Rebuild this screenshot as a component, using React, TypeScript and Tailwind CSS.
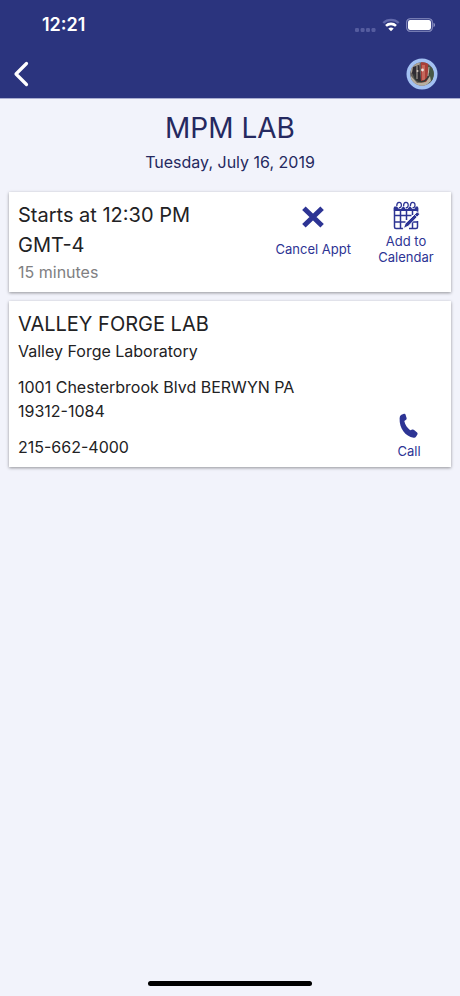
import type { ReactNode } from "react";

function StatusBar() {
  return (
    <div className="flex h-[50px] items-center justify-between pl-[42px] pr-6">
      <time className="text-lg font-semibold leading-6">12:21</time>
      <div className="flex items-center gap-[6px]">
        <svg width="22" height="16" viewBox="0 0 22 16" fill="#555c9f" aria-hidden="true">
          <rect x="1" y="11" width="4" height="4" rx="1.2" />
          <rect x="6.600" y="11" width="4" height="4" rx="1.2" />
          <rect x="12" y="11" width="4" height="4" rx="1.2" />
          <rect x="17.500" y="11" width="4" height="4" rx="1.2" />
        </svg>
        <svg width="18" height="14" viewBox="0 0 18 14" fill="none" aria-hidden="true">
          <path d="M1.300 5C5.500 .8 12.500 .8 16.700 5" stroke="#6269ab" strokeWidth="2.300" />
          <path d="M4 7.900C6.800 5.200 11.200 5.200 14 7.900" stroke="#fff" strokeWidth="2.600" />
          <path d="M6.300 10.600C7.900 9.200 10.100 9.200 11.700 10.600L9 13.300Z" fill="#fff" />
        </svg>
        <svg width="30" height="14" viewBox="0 0 30 14" aria-hidden="true">
          <rect x=".7" y=".7" width="25.600" height="12.600" rx="3.600" fill="none" stroke="#8e93c4" strokeWidth="1.100" />
          <rect x="2" y="2" width="23" height="10" rx="2.200" fill="#fff" />
          <path d="M27.500 4.800c2 .7 2 3.700 0 4.400Z" fill="#8e93c4" />
        </svg>
      </div>
    </div>
  );
}

function Avatar() {
  return (
    <svg width="32" height="32" viewBox="0 0 32 32" aria-hidden="true">
      <defs>
        <clipPath id="portrait">
          <circle cx="16" cy="16" r="11.800" />
        </clipPath>
      </defs>
      <circle cx="16" cy="16" r="15.500" fill="#a3c1f3" />
      <g clipPath="url(#portrait)">
        <path fill="#69615d" d="M0 0h32v32H0z" />
        <path fill="#aaa195" d="M4 5h10l-2 6-7 4z" />
        <path fill="#302b32" d="M7 9l6-2 2 17-5-2-4-7z" />
        <path fill="#a83f39" d="M15 3h7l1 12-2 9-6 1z" />
        <path fill="#c5685b" d="M16 7h3v15h-3z" />
        <path fill="#465746" d="M22 7l6 4v11l-5 4z" />
        <path fill="#b8afa0" d="M5 18l6 7 9-1 4-6 1 5-7 6H9l-5-6z" />
        <path fill="none" stroke="#343a37" strokeWidth="1.500" d="M8 16c0 10 14 11 15-1" />
        <path stroke="#d9d1c2" strokeWidth=".8" d="M11 8v13M23 9l-1 9" />
        <circle cx="16.500" cy="12" r="1.400" fill="#eee2da" />
        <circle cx="11.500" cy="13" r="1" fill="#d4c6bd" />
      </g>
    </svg>
  );
}

function CalendarIcon() {
  return (
    <svg width="28" height="30" viewBox="0 0 28 30" fill="none" stroke="#2d3494" aria-hidden="true">
      <path d="M2.500 7v19q0 1.500 1.500 1.500h7M25.500 7v6M25.500 20v6q0 1.500-1.500 1.500h-7M2.500 14.500h17M2.500 21h11M8.500 9v18M14.500 9v10M20.500 9v5M19.500 21h6M20.500 19.500v8" strokeWidth="1.500" />
      <path d="M1.800 10V6.500q0-1 1-1H5L7 8h2l2-2.500h1L13.500 8h2L17.500 5.500h1L20.300 8h2L23.800 5.500h1.400q1 0 1 1V10Z" fill="#2d3494" stroke="none" />
      <path d="M4.800 5c-.2-4.800 4.800-4.800 4.600-.8C9.300 6 8.200 7 6.900 6.700M11.600 5c-.2-4.800 4.800-4.800 4.600-.8C16.100 6 15 7 13.700 6.700M18.400 5c-.2-4.800 4.800-4.800 4.600-.8C22.900 6 21.800 7 20.500 6.700" strokeWidth="1.300" />
      <path d="M24.600 11.500q.8-.7 1.500 0l1 1q.7.800 0 1.500L16.300 25.200l-5 2.200 2-5Z" fill="#2d3494" stroke="#fff" strokeWidth=".9" />
      <path d="M22.700 13.700l2.500 2.500" stroke="#fff" strokeWidth=".7" />
    </svg>
  );
}

function CancelIcon() {
  return (
    <svg width="24" height="24" viewBox="0 0 24 24" aria-hidden="true">
      <path d="M2.900 3.200l18.200 17.600M21.100 3.200L2.900 20.800" stroke="#2d3494" strokeWidth="5" />
    </svg>
  );
}

function PhoneIcon() {
  return (
    <svg width="20" height="26" viewBox="0 0 20 26" fill="#2d3494" aria-hidden="true">
      <path d="M2.400 1.700 5 .8q1.100-.3 1.500.8L7.600 5q.3 1-.5 1.700L5.300 8.100c.8 3.700 2.900 7 5.900 9.200l2.200-.8q1-.3 1.700.4l3 2.700q.9.900.3 1.900l-1.400 2.200q-.8 1.300-2.400 1C6.300 23.300.2 15.600.6 5.200q0-2.700 1.800-3.500Z" />
    </svg>
  );
}

function Action({ icon, className, children }: { icon: ReactNode; className: string; children: ReactNode }) {
  return (
    <button type="button" className={`flex shrink-0 flex-col items-center text-[13px] leading-4 text-[#2d3494] ${className}`}>
      {icon}
      <span>{children}</span>
    </button>
  );
}

export default function App() {
  return (
    <div className="flex min-h-screen flex-col bg-[#f2f3fb] font-['Inter','Liberation_Sans',sans-serif] text-[#222224]">
      <header className="border-b border-[#a9add0] bg-[#2b347e] text-white">
        <StatusBar />
        <nav className="flex h-12 items-center justify-between pl-3 pr-[22px]">
          <button type="button" aria-label="Back">
            <svg width="20" height="26" viewBox="0 0 20 26" fill="none" stroke="#fff" strokeWidth="3.200" strokeLinecap="round" strokeLinejoin="round" aria-hidden="true">
              <path d="M14.500 2.500 4 13l10.500 10.500" />
            </svg>
          </button>
          <button type="button" aria-label="Profile">
            <Avatar />
          </button>
        </nav>
      </header>
      <main className="flex flex-1 flex-col px-[9px]">
        <div className="pb-4 pt-[9px] text-center text-[#252960]">
          <h1 className="text-[28px] leading-10">MPM LAB</h1>
          <p className="text-base leading-7">Tuesday, July 16, 2019</p>
        </div>
        <div className="flex flex-col gap-[9px]">
          <section className="flex justify-between bg-white py-2 pl-[9px] pr-[14px] shadow-[0_1px_3px_rgba(0,0,0,0.4)]">
            <div className="min-w-0 max-w-[200px]">
              <h2 className="text-xl leading-[30px]">Starts at 12:30 PM GMT-4</h2>
              <p className="text-base leading-6 text-[#808082]">15 minutes</p>
            </div>
            <div className="flex items-start gap-6">
              <Action icon={<CancelIcon />} className="gap-3 pt-[5px]">Cancel Appt</Action>
              <Action icon={<CalendarIcon />} className="w-[62px] gap-[2px] pt-[1px]">Add to Calendar</Action>
            </div>
          </section>
          <section className="flex items-end justify-between bg-white py-2 pl-[9px] pr-[14px] shadow-[0_1px_3px_rgba(0,0,0,0.4)]">
            <div className="min-w-0 max-w-[300px]">
              <h2 className="text-xl leading-[30px]">VALLEY FORGE LAB</h2>
              <p className="text-base leading-6">Valley Forge Laboratory</p>
              <address className="mt-3 text-base not-italic leading-6">1001 Chesterbrook Blvd BERWYN PA 19312-1084</address>
              <p className="mt-3 text-base leading-6">215-662-4000</p>
            </div>
            <Action icon={<PhoneIcon />} className="w-14 gap-1">Call</Action>
          </section>
        </div>
      </main>
      <footer className="flex justify-center pb-[10px]">
        <div className="h-[5px] w-[164px] rounded-full bg-black" />
      </footer>
    </div>
  );
}
